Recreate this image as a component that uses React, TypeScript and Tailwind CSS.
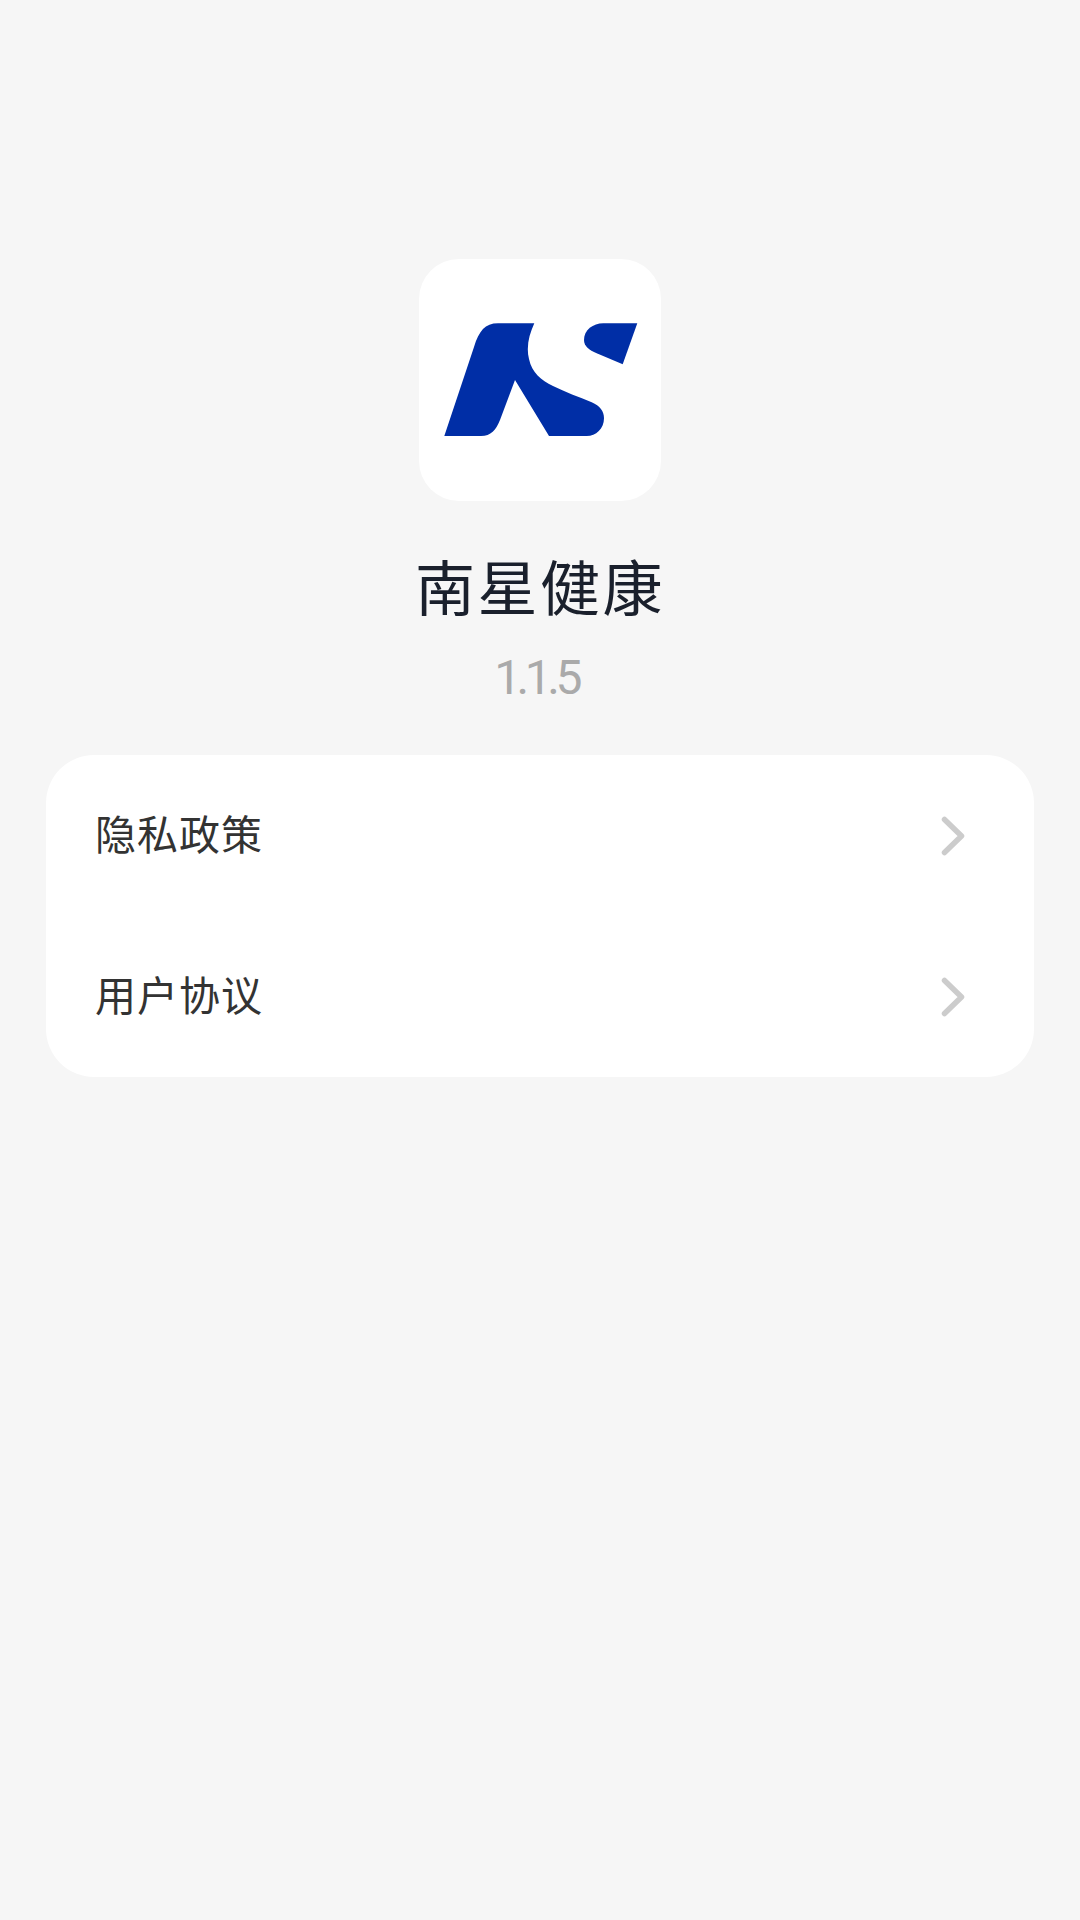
const cjk = 'font-["Roboto","Noto_Sans_CJK_SC",sans-serif]';

function Logo() {
  return (
    <svg viewBox="0 0 242 242" className="w-full h-full blur-[0.5px]">
      <path
        fill="#002ea6"
        d="M25.3 177 L55 88 C60 72 66 64.3 79 64.3 L115.3 64.3 C110 76 107 88 110 100 C113 114 122 121 134 127 C146 133 160 138 172.7 143.3 C181 147 185 152 185 159.3 C185 170 177 177 167.7 177 L130 177 L96 121 L81 161 C77 171 72 177 62 177 Z"
      />
      <path
        fill="#002ea6"
        d="M218.3 64.3 L203.7 105.3 L177.7 94.3 C170 91 165 87 165 81 C165 71 174 64.3 184.3 64.3 Z"
      />
    </svg>
  );
}

function Chevron() {
  return (
    <svg viewBox="0 0 24 40" className="w-6 h-10" fill="none">
      <path d="M3.5 3.5 L20.5 20 L3.5 36.5" stroke="#cccccc" strokeWidth="5.5" strokeLinecap="round" strokeLinejoin="round" />
    </svg>
  );
}

function Row({ label }: { label: string }) {
  return (
    <div className="h-[161px] flex items-center justify-between pl-[49px] pr-[69px]">
      <span className="pt-[2px] text-[41px] leading-none tracking-[1px] font-normal text-[#333333]">{label}</span>
      <Chevron />
    </div>
  );
}

export default function App() {
  return (
    <div className={`min-h-[1920px] bg-[#f6f6f6] flex flex-col items-center pt-[259px] px-[46px] ${cjk}`}>
      <div className="w-[242px] h-[242px] bg-white rounded-[40px] overflow-hidden">
        <Logo />
      </div>
      <h1 className="mt-[52px] text-[60px] leading-[76px] tracking-[2.5px] font-normal text-[#1a202c]">南星健康</h1>
      <p className="mt-[21px] -ml-[8px] text-[48px] leading-[56px] tracking-[-4.5px] text-[#aaaaaa]">1.1.5</p>
      <div className="mt-[49px] w-full bg-white rounded-[48px]">
        <Row label="隐私政策" />
        <Row label="用户协议" />
      </div>
    </div>
  );
}
